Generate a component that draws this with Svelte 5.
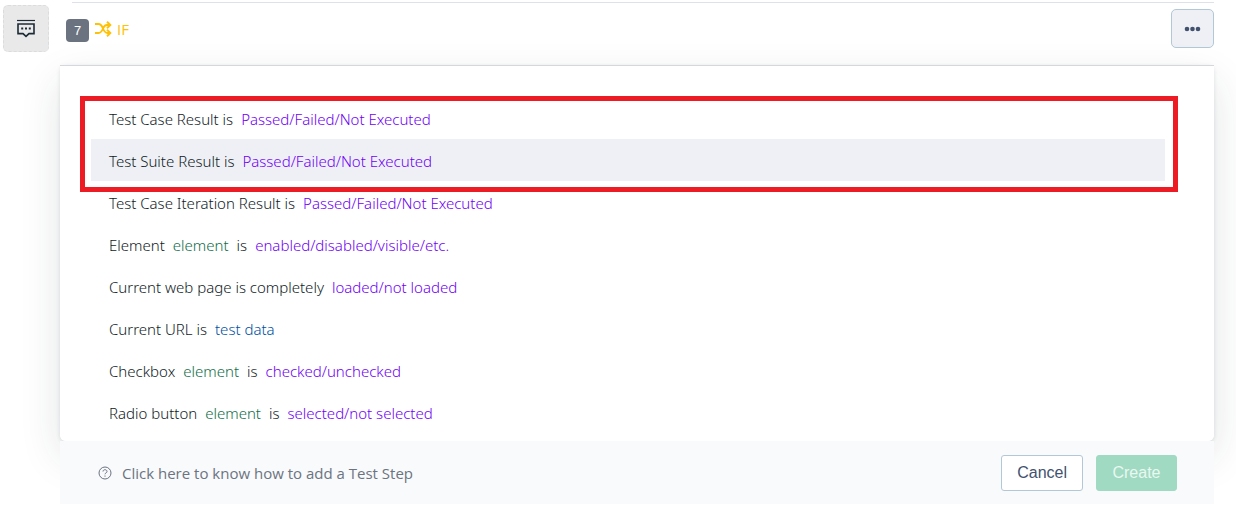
<script>
  const steps = [
    [['Test Case Result is'], ['Passed/Failed/Not Executed', 'choice']],
    [['Test Suite Result is'], ['Passed/Failed/Not Executed', 'choice']],
    [['Test Case Iteration Result is'], ['Passed/Failed/Not Executed', 'choice']],
    [['Element'], ['element', 'element'], ['is'], ['enabled/disabled/visible/etc.', 'choice']],
    [['Current web page is completely'], ['loaded/not loaded', 'choice']],
    [['Current URL is'], ['test data', 'data']],
    [['Checkbox'], ['element', 'element'], ['is'], ['checked/unchecked', 'choice']],
    [['Radio button'], ['element', 'element'], ['is'], ['selected/not selected', 'choice']]
  ];
  let active = $state(1);
</script>

<div class="page">
  <button class="comment" aria-label="Step description">
    <svg width="20" height="20" viewBox="0 0 20 20" fill="none" stroke="#1c2b36" stroke-width="1.6">
      <path d="M1 1.500h18" stroke-width="1.2" />
      <path d="M2 5h16v9.600h-5L10 17.400 7 14.600H2z" />
      <path d="M5.200 9.500h2M9 9.500h2M12.800 9.500h2" stroke-width="2" />
    </svg>
  </button>

  <main>
    <header>
      <span class="number">7</span>
      <svg class="shuffle" width="17" height="16" viewBox="0 0 17 16" fill="none" stroke="#ffc107" stroke-width="1.9">
        <path d="M0 3h3.500c2.500 0 3.500 2 4.500 4.500s2.500 4.500 4.500 4.500h3" />
        <path d="M0 12h3.500c2.500 0 3.500-2 4.500-4.500s2-3.500 4-3.500h3.500" />
        <path d="M12 0.800l3.300 3.200L12 7.200M12 8.800l3.300 3.200-3.300 3.200" />
      </svg>
      <span class="kind">IF</span>
      <button class="more" aria-label="More options">
        <svg width="17" height="6" viewBox="0 0 17 6" fill="#42526e">
          <circle cx="3" cy="3" r="2.300" /><circle cx="8.500" cy="3" r="2.300" /><circle cx="14" cy="3" r="2.300" />
        </svg>
      </button>
    </header>

    <section class="panel">
      <div class="card">
        <ul>
          {#each steps as parts, i}
            <li>
              <button class="step" class:active={i === active} onclick={() => (active = i)}>
                {#each parts as [text, type]}<span class={type}>{text}</span>{/each}
              </button>
            </li>
          {/each}
        </ul>
        <div class="highlight"></div>
      </div>
      <footer>
        <a href="#help">
          <svg width="14" height="14" viewBox="0 0 14 14" fill="none" stroke="#6b7480">
            <circle cx="7" cy="7" r="6" />
            <path d="M5 5.500c0-2.400 4-2.400 4 0C9 7 7 6.800 7 8.300M7 9.500v1.200" />
          </svg>
          Click here to know how to add a Test Step
        </a>
        <button class="cancel">Cancel</button>
        <button class="create">Create</button>
      </footer>
    </section>
  </main>
</div>

<style>
  :global(body) {
    margin: 0;
    background: #fff;
  }
  .page {
    display: flex;
    align-items: flex-start;
    gap: 11px;
    padding: 2px 22px 20px 3px;
    overflow: hidden;
    font-family: 'Segoe UI', 'Open Sans', sans-serif;
    font-size: 15px;
    color: #1c2b36;
  }
  button {
    box-sizing: border-box;
    margin: 0;
    padding: 0;
    font: inherit;
    color: inherit;
    cursor: pointer;
  }
  svg {
    display: block;
    flex: none;
  }
  .comment {
    display: grid;
    place-items: center;
    flex: none;
    width: 46px;
    height: 47px;
    margin-top: 3px;
    border: 1px dashed #dcdcdc;
    border-radius: 5px;
    background: #e9e9e9;
  }
  main {
    flex: 1;
    min-width: 0;
  }
  header {
    display: flex;
    align-items: center;
    height: 53px;
    margin-bottom: 10px;
    padding-left: 6px;
    position: relative;
  }
  header::before {
    content: '';
    position: absolute;
    top: 0;
    right: 0;
    left: 12px;
    border-top: 1px solid #dfe1e8;
  }
  .number {
    width: 23px;
    margin: 3px 6px 0 0;
    border-radius: 4px;
    background: #6b7280;
    color: #fff;
    font: 13px/23px 'Liberation Sans', Arial, sans-serif;
    text-align: center;
  }
  .kind {
    margin-left: 5px;
    color: #ffc107;
  }
  .more {
    display: grid;
    place-items: center;
    width: 43px;
    height: 39px;
    margin-left: auto;
    border: 1px solid #b3c8d6;
    border-radius: 5px;
    background: #eff0f5;
  }
  .card {
    position: relative;
    z-index: 1;
    padding: 31px 49px 8px 31px;
    border-top: 1px solid #d5d7da;
    border-radius: 0 0 6px 6px;
    background: #fff;
  }
  .panel {
    position: relative;
    z-index: 0;
  }
  .panel::before {
    content: '';
    position: absolute;
    z-index: -1;
    inset: 0 0 63px;
    border-radius: 6px;
    box-shadow:
      0 16px 40px rgba(28, 43, 54, 0.13),
      0 1px 4px rgba(28, 43, 54, 0.12);
  }
  ul {
    margin: 0;
    padding: 0;
    list-style: none;
  }
  .step {
    display: flex;
    align-items: center;
    gap: 8px;
    width: 100%;
    height: 42px;
    padding: 2px 17px 0 18px;
    border: 0;
    background: none;
    font-family: 'Segoe UI', 'Noto Sans', sans-serif;
    font-weight: 300;
    color: #101c26;
    white-space: nowrap;
  }
  .step.active {
    background: #eff0f5;
  }
  .choice {
    color: #7000f5;
  }
  .element {
    color: #0f6e49;
  }
  .data {
    color: #00509e;
  }
  .highlight {
    position: absolute;
    top: 30px;
    right: 36px;
    left: 20px;
    height: 86px;
    border: 5px solid #ed1c24;
    pointer-events: none;
  }
  footer {
    position: relative;
    display: flex;
    align-items: center;
    gap: 13px;
    padding: 14px 37px 13px 38px;
  }
  footer::before {
    content: '';
    position: absolute;
    z-index: -1;
    inset: 0;
    background: #f9fafc;
  }
  footer a {
    display: flex;
    align-items: center;
    gap: 10px;
    margin-right: auto;
    color: #6b7480;
    text-decoration: none;
  }
  footer button {
    min-width: 81px;
    height: 36px;
    padding: 0 15px;
    border: 1px solid #b3c8d6;
    border-radius: 3px;
    background: #fff;
    color: #42526e;
    font: 16px 'Liberation Sans', Arial, sans-serif;
  }
  footer .create {
    border-color: #a0dac2;
    background: #a0dac2;
    color: #e9f8f1;
  }
</style>
